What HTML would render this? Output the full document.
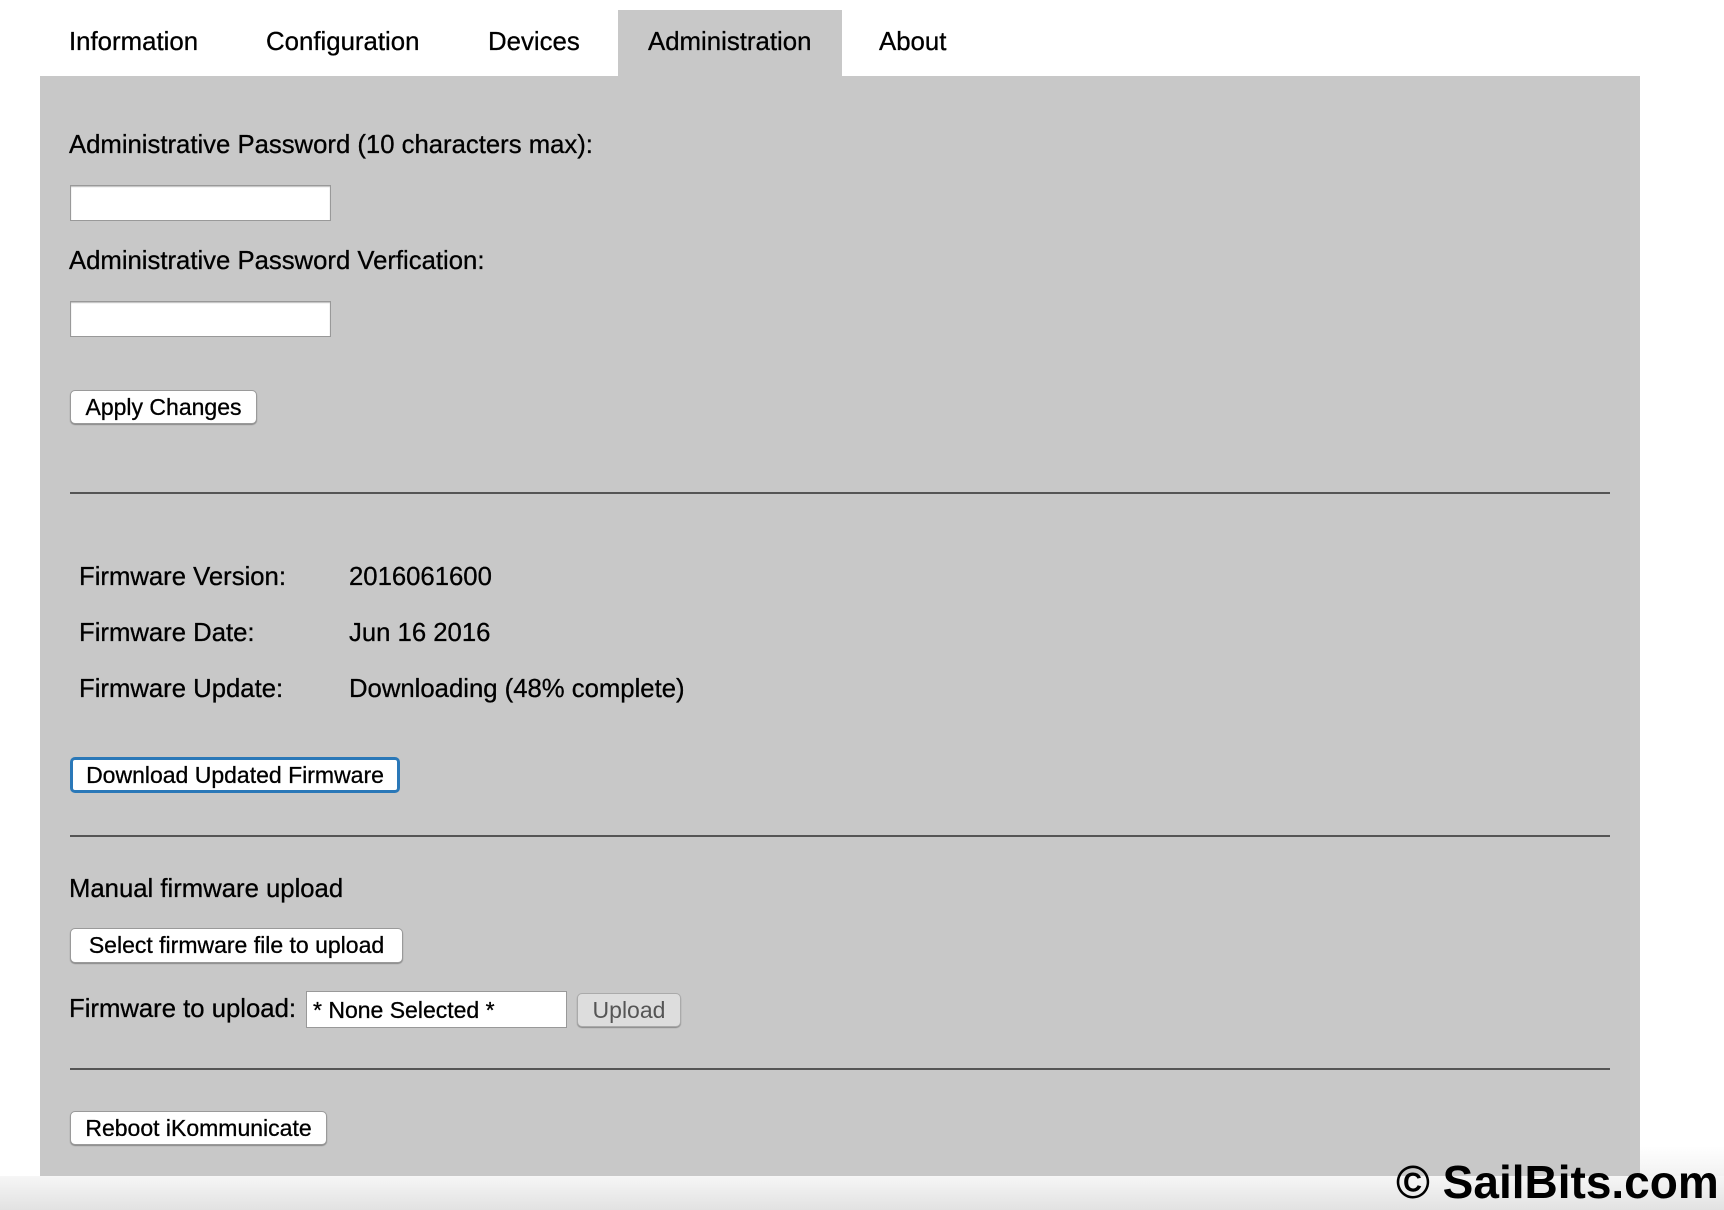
<!DOCTYPE html>
<html><head><meta charset="utf-8"><style>
*{margin:0;padding:0;box-sizing:border-box}
body{width:1724px;height:1210px;background:#fff;font-family:"Liberation Sans",Arial,sans-serif;color:#000;position:relative;overflow:hidden;-webkit-text-stroke:0.3px #000}
.a{position:absolute;white-space:nowrap}
.t{font-size:25.8px;top:28px}
.l{font-size:25.7px;line-height:28px}
.in{position:absolute;background:#fff;border:1px solid #999;box-shadow:inset 0 1px 1px #bbb}
.b{position:absolute;background:#fff;border:1px solid #9a9a9a;border-radius:5px;font-size:23px;display:flex;align-items:center;justify-content:center;box-shadow:0 1px 1px #888}
.hr{position:absolute;left:70px;width:1540px;height:2px;background:#555}
</style></head><body>
<div class="a" style="left:40px;top:76px;width:1600px;height:1100px;background:#c8c8c8"></div>
<div class="a" style="left:618px;top:10px;width:224px;height:66px;background:#c8c8c8"></div>
<div class="a t" style="left:69px">Information</div>
<div class="a t" style="left:266px">Configuration</div>
<div class="a t" style="left:488px">Devices</div>
<div class="a t" style="left:648px">Administration</div>
<div class="a t" style="left:879px">About</div>

<div class="a l" style="left:69px;top:131px">Administrative Password (10 characters max):</div>
<div class="in" style="left:70px;top:185px;width:261px;height:36px"></div>
<div class="a l" style="left:69px;top:247px">Administrative Password Verfication:</div>
<div class="in" style="left:70px;top:301px;width:261px;height:36px"></div>
<div class="b" style="left:70px;top:390px;width:187px;height:34px">Apply Changes</div>
<div class="hr" style="top:492px"></div>

<div class="a l" style="left:79px;top:563px">Firmware Version:</div>
<div class="a l" style="left:349px;top:563px">2016061600</div>
<div class="a l" style="left:79px;top:619px">Firmware Date:</div>
<div class="a l" style="left:349px;top:619px">Jun 16 2016</div>
<div class="a l" style="left:79px;top:675px">Firmware Update:</div>
<div class="a l" style="left:349px;top:675px">Downloading (48% complete)</div>
<div class="b" style="left:70px;top:757px;width:330px;height:36px;border:3px solid #2a78b8;box-shadow:none">Download Updated Firmware</div>
<div class="hr" style="top:835px"></div>

<div class="a l" style="left:69px;top:875px">Manual firmware upload</div>
<div class="b" style="left:70px;top:928px;width:333px;height:35px">Select firmware file to upload</div>
<div class="a l" style="left:69px;top:995px">Firmware to upload:</div>
<div class="in" style="left:306px;top:991px;width:261px;height:37px;font-size:23px;padding:5px 6px;box-shadow:none">* None Selected *</div>
<div class="b" style="left:577px;top:993px;width:104px;height:34px;background:#ddd;color:#555;border-color:#aaa;-webkit-text-stroke:0">Upload</div>
<div class="hr" style="top:1068px"></div>

<div class="b" style="left:70px;top:1111px;width:257px;height:34px">Reboot iKommunicate</div>

<div class="a" style="left:0;top:1176px;width:1724px;height:34px;background:linear-gradient(#f6f6f6,#e2e2e2)"></div>
<div class="a" style="left:1640px;top:1146px;width:84px;height:30px;background:linear-gradient(#fff,#f2f2f2)"></div>
<div class="a" style="left:1396px;top:1156px;font-size:46px;font-weight:bold;color:#000;line-height:52px;-webkit-text-stroke:0">© SailBits.com</div>
</body></html>
